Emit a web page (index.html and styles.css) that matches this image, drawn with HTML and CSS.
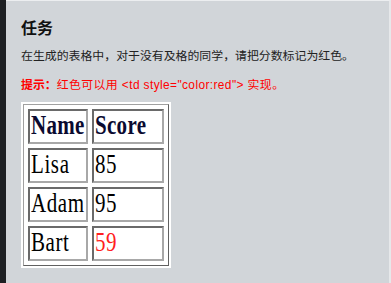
FILE: index.html
```html
<!DOCTYPE html>
<html lang="zh">
<head>
<meta charset="utf-8">
<link rel="stylesheet" href="styles.css">
</head>
<body>
<div class="page">
  <div class="sidebar"></div>
  <main class="main">
    <h3 class="title">任务</h3>
    <p class="desc">在生成的表格中，对于没有及格的同学，请把分数标记为红色。</p>
    <p class="hint"><b>提示：</b>红色可以用 &lt;td style="color:red"&gt; 实现。</p>
    <div class="table-wrap">
      <table class="grid">
        <tr><th class="c1"><span class="t">Name</span></th><th class="c2"><span class="t">Score</span></th></tr>
        <tr><td class="c1"><span class="t">Lisa</span></td><td class="c2"><span class="t">85</span></td></tr>
        <tr><td class="c1"><span class="t">Adam</span></td><td class="c2"><span class="t">95</span></td></tr>
        <tr><td class="c1"><span class="t">Bart</span></td><td class="c2 red"><span class="t">59</span></td></tr>
      </table>
    </div>
  </main>
</div>
</body>
</html>
```
FILE: styles.css
```css
html, body {
  margin: 0;
  padding: 0;
  height: 100%;
}
body {
  font-family: "Noto Sans CJK SC", sans-serif;
  background: #d1d5d9;
}
.page {
  display: flex;
  height: 283px;
}
.sidebar {
  width: 6px;
  flex: none;
  background: #1d2023;
}
.main {
  flex: 1;
  background: #d1d5d9;
  border-top: 1px solid #eceef0;
  border-right: 2px solid #e6e8ea;
  padding: 16px 0 0 15px;
}
.title {
  margin: 0;
  font-size: 16px;
  line-height: 20px;
  font-weight: bold;
  color: #111;
}
.desc {
  margin: 9px 0 0;
  font-size: 11.9px;
  line-height: 18px;
  color: #222;
}
.hint {
  margin: 12px 0 0;
  font-family: "Liberation Sans", "Noto Sans CJK SC", sans-serif;
  font-size: 11.9px;
  letter-spacing: 0.4px;
  line-height: 18px;
  color: #ff0000;
}
.hint b {
  font-weight: bold;
  letter-spacing: 0;
}
.table-wrap {
  display: inline-block;
  margin-top: 8px;
  background: #fff;
  padding: 2px;
}
.grid {
  border-collapse: separate;
  border-spacing: 4px;
  border: 1px solid;
  border-color: #a0a0a0 #606060 #606060 #a0a0a0;
  background: #fff;
  table-layout: fixed;
  width: 146px;
  font-family: "Liberation Serif", serif;
  font-size: 21px;
}
.grid th, .grid td {
  border: 2px solid;
  border-color: #6a6a6a #a8a8a8 #a8a8a8 #6a6a6a;
  height: 31px;
  padding: 0 1px;
  text-align: left;
  vertical-align: middle;
  color: #000;
  line-height: 31px;
  white-space: nowrap;
  overflow: visible;
}
.grid th {
  font-weight: bold;
  color: #0a0a30;
}
.c1 { width: 54px; }
.c2 { width: 66px; }
.grid td.red { color: #ff2020; }
.t {
  display: inline-block;
  transform: scale(1, 1.3);
  transform-origin: 50% 55%;
}
.grid td .t {
  letter-spacing: 0.6px;
}
.grid th .t {
  letter-spacing: 0.3px;
}
```
